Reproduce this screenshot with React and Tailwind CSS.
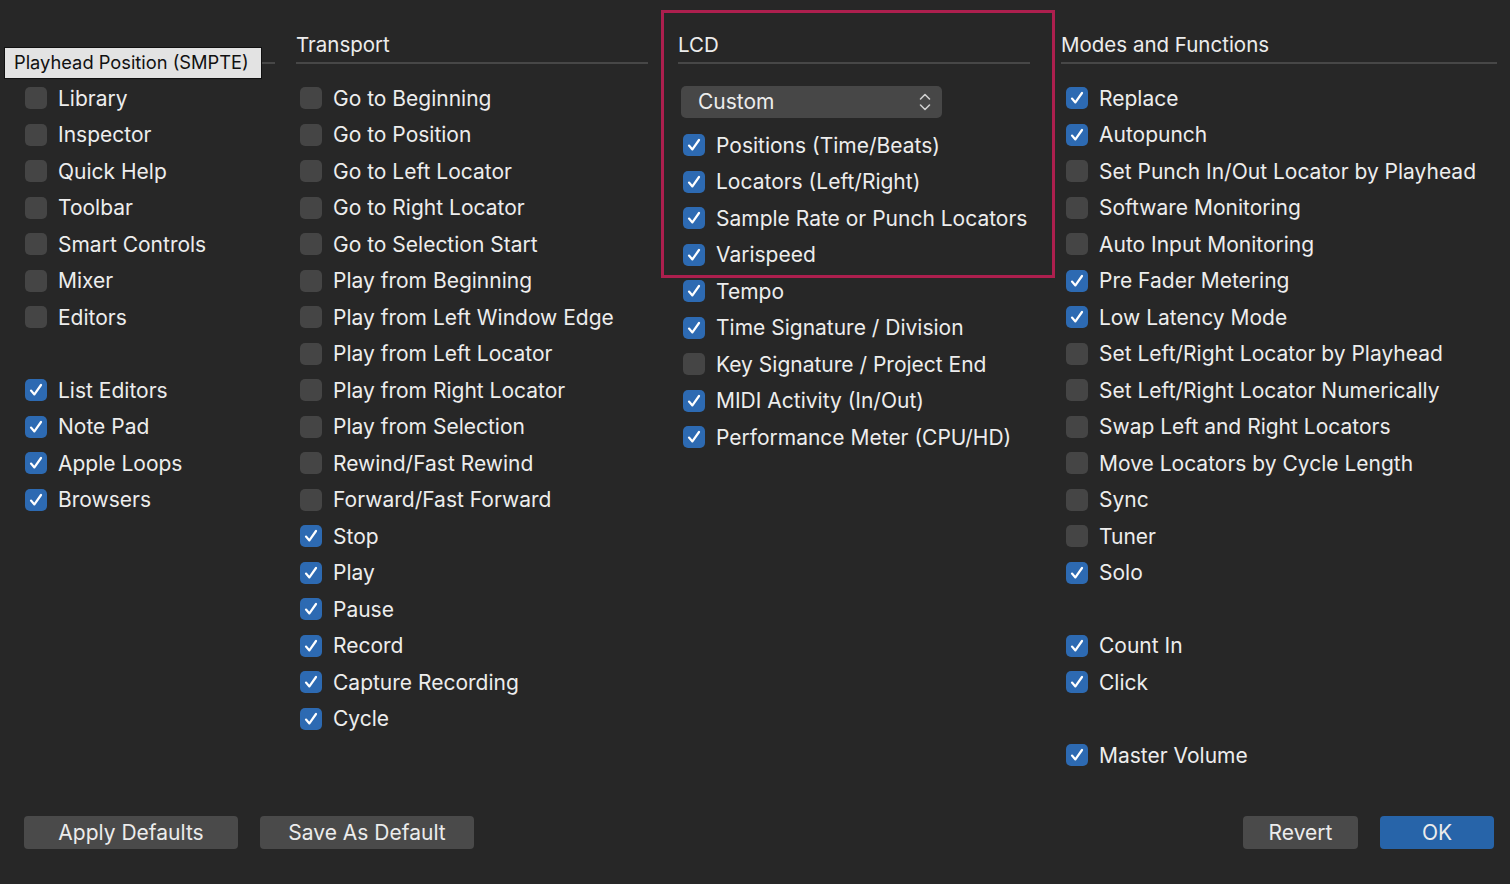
import React from 'react';

const FONT = { fontFamily: 'Inter, "Noto Sans", "Liberation Sans", sans-serif' };

const col1 = [
  ['Library', false],
  ['Inspector', false],
  ['Quick Help', false],
  ['Toolbar', false],
  ['Smart Controls', false],
  ['Mixer', false],
  ['Editors', false],
  null,
  ['List Editors', true],
  ['Note Pad', true],
  ['Apple Loops', true],
  ['Browsers', true],
];

const transport = [
  ['Go to Beginning', false],
  ['Go to Position', false],
  ['Go to Left Locator', false],
  ['Go to Right Locator', false],
  ['Go to Selection Start', false],
  ['Play from Beginning', false],
  ['Play from Left Window Edge', false],
  ['Play from Left Locator', false],
  ['Play from Right Locator', false],
  ['Play from Selection', false],
  ['Rewind/Fast Rewind', false],
  ['Forward/Fast Forward', false],
  ['Stop', true],
  ['Play', true],
  ['Pause', true],
  ['Record', true],
  ['Capture Recording', true],
  ['Cycle', true],
];

const lcd = [
  ['Positions (Time/Beats)', true],
  ['Locators (Left/Right)', true],
  ['Sample Rate or Punch Locators', true],
  ['Varispeed', true],
  ['Tempo', true],
  ['Time Signature / Division', true],
  ['Key Signature / Project End', false],
  ['MIDI Activity (In/Out)', true],
  ['Performance Meter (CPU/HD)', true],
];

const modes = [
  ['Replace', true],
  ['Autopunch', true],
  ['Set Punch In/Out Locator by Playhead', false],
  ['Software Monitoring', false],
  ['Auto Input Monitoring', false],
  ['Pre Fader Metering', true],
  ['Low Latency Mode', true],
  ['Set Left/Right Locator by Playhead', false],
  ['Set Left/Right Locator Numerically', false],
  ['Swap Left and Right Locators', false],
  ['Move Locators by Cycle Length', false],
  ['Sync', false],
  ['Tuner', false],
  ['Solo', true],
  null,
  ['Count In', true],
  ['Click', true],
  null,
  ['Master Volume', true],
];

function Box({ checked }) {
  return checked ? (
    <span className="flex h-[22px] w-[22px] shrink-0 items-center justify-center rounded-[5px] bg-[#2d6ab2]">
      <svg width="16" height="16" viewBox="0 0 16 16" fill="none">
        <path d="M3 8.6 L6.4 12.4 L13 3" stroke="white" strokeWidth="2.2" strokeLinecap="round" strokeLinejoin="round" />
      </svg>
    </span>
  ) : (
    <span className="h-[22px] w-[22px] shrink-0 rounded-[5px] bg-[#454545]" />
  );
}

function Rows({ items, pad }) {
  return (
    <div className={pad}>
      {items.map((it, i) =>
        it ? (
          <div key={i} className="flex h-[36.5px] items-center">
            <Box checked={it[1]} />
            <span className="ml-[11px] whitespace-nowrap text-[21px] text-[#ededed]">{it[0]}</span>
          </div>
        ) : (
          <div key={i} className="h-[36.5px]" />
        )
      )}
    </div>
  );
}

function Header({ children }) {
  return (
    <div className="flex h-[33px] items-start border-b-2 border-[#474747] text-[20.5px] leading-[28px] text-[#ececec]">
      {children}
    </div>
  );
}

export default function App() {
  return (
    <div className="relative h-[884px] w-[1510px] overflow-hidden bg-[#272727]" style={FONT}>
      <div className="flex pl-[4px]">
        {/* column 1 */}
        <div className="w-[271px] pt-[47px]">
          <div className="flex items-center">
            <div className="flex h-[32px] w-[258px] items-center border border-[#111] bg-[#e3e3e3] pl-[9px] text-[18.3px] text-[#111]">
              Playhead Position (SMPTE)
            </div>
            <div className="h-[2px] flex-1 bg-[#474747]" />
          </div>
          <Rows items={col1} pad="pl-[21px] pt-[1px]" />
        </div>

        {/* transport */}
        <div className="ml-[21px] w-[352px] pt-[31px]">
          <Header>Transport</Header>
          <Rows items={transport} pad="pl-[4px] pt-[16px]" />
        </div>

        {/* lcd */}
        <div className="ml-[30px] w-[352px] pt-[31px]">
          <Header>LCD</Header>
          <div className="ml-[3px] mt-[22px] flex h-[32px] w-[261px] items-center justify-between rounded-[5px] bg-[#474747] pl-[17px] pr-[10px] text-[21px] text-[#ececec]">
            <span>Custom</span>
            <svg width="14" height="20" viewBox="0 0 14 20" fill="none">
              <path d="M2.5 7 L7 2.5 L11.5 7" stroke="#cfcfcf" strokeWidth="1.6" strokeLinecap="round" strokeLinejoin="round" />
              <path d="M2.5 13 L7 17.5 L11.5 13" stroke="#cfcfcf" strokeWidth="1.6" strokeLinecap="round" strokeLinejoin="round" />
            </svg>
          </div>
          <Rows items={lcd} pad="pl-[5px] pt-[9px]" />
        </div>

        {/* modes */}
        <div className="ml-[31px] w-[436px] pt-[31px]">
          <Header>Modes and Functions</Header>
          <Rows items={modes} pad="pl-[5px] pt-[16px]" />
        </div>
      </div>

      {/* highlight annotation */}
      <div className="pointer-events-none absolute left-[661px] top-[10px] h-[268px] w-[394px] border-[3px] border-[#ad1f4e]" />

      {/* footer buttons */}
      <div className="absolute bottom-[35px] left-[24px] right-[16px] flex items-center text-[21px] text-[#ececec]">
        <button className="flex h-[33px] w-[214px] items-center justify-center rounded-[4px] bg-[#4a4a4a]">Apply Defaults</button>
        <button className="ml-[22px] flex h-[33px] w-[214px] items-center justify-center rounded-[4px] bg-[#4a4a4a]">Save As Default</button>
        <div className="flex-1" />
        <button className="flex h-[33px] w-[115px] items-center justify-center rounded-[4px] bg-[#4a4a4a]">Revert</button>
        <button className="ml-[22px] flex h-[33px] w-[114px] items-center justify-center rounded-[4px] bg-[#2764a9]">OK</button>
      </div>
    </div>
  );
}
